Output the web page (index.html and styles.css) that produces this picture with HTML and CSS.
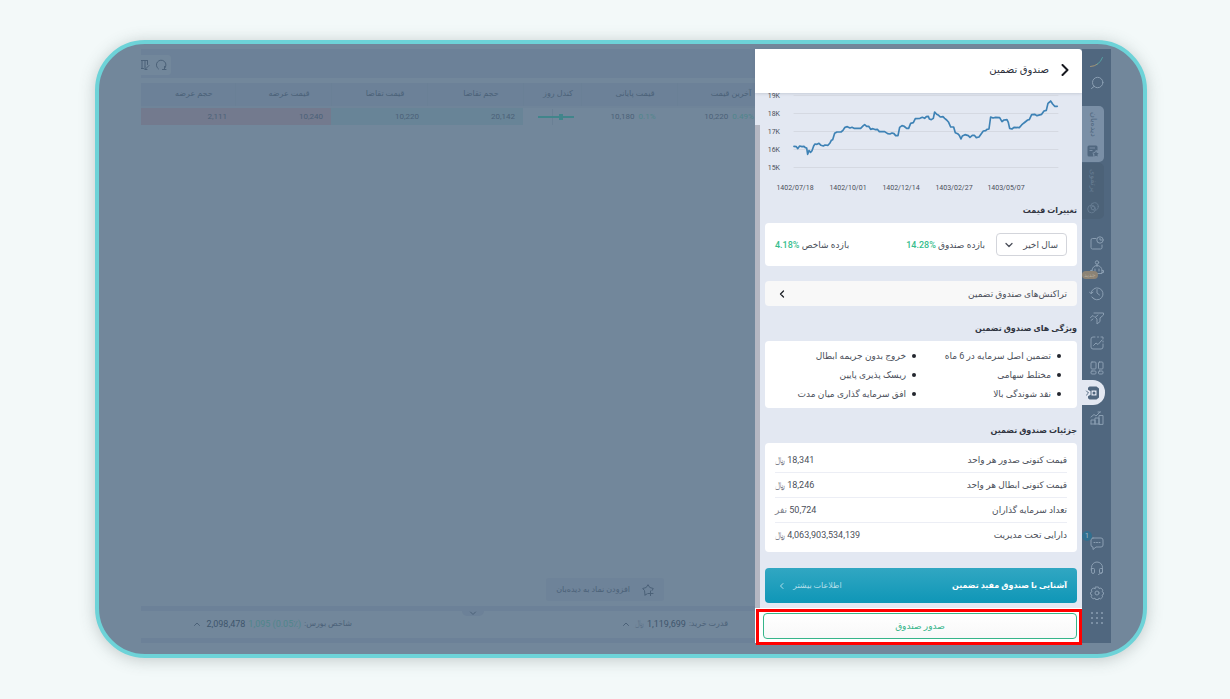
FILE: index.html
```html
<!DOCTYPE html>
<html lang="fa">
<head>
<meta charset="utf-8">
<title>صندوق تضمین</title>
<link rel="stylesheet" href="styles.css">
</head>
<body>
<div class="frame">
<div class="app">
  <main class="market">
    <div class="toolbar">
      <div class="tools">
        <button class="tool" aria-label="ستون‌ها"><svg viewBox="0 0 12 12"><path d="M0 1.500h6M1 1.500v8M4 1.500v6M0 9.500h2.500M6.500 1.500v4M4 10.500l4-4M4 8v2.500h2"/></svg></button>
        <button class="tool" aria-label="بازخوانی"><svg viewBox="0 0 12 12"><path d="M3.500 10A4.800 4.800 0 1 1 9.500 9.500M7.500 10.500h3.500M9.500 7.500v3"/></svg></button>
      </div>
    </div>
    <table class="quotes">
      <colgroup><col class="c-first"><col class="c-std"><col class="c-std"><col class="c-std"><col class="c-candle"><col class="c-std"><col class="c-std"></colgroup>
      <thead><tr><th>حجم عرضه</th><th>قیمت عرضه</th><th>قیمت تقاضا</th><th>حجم تقاضا</th><th>کندل روز</th><th>قیمت پایانی</th><th>آخرین قیمت</th></tr></thead>
      <tbody><tr>
        <td class="ask">2,111</td><td class="ask">10,240</td><td class="bid">10,220</td><td class="bid">20,142</td>
        <td class="mid"><svg class="candle" viewBox="0 0 36 16"><path class="axis" d="M14.500 0v16"/><path class="wick" d="M0 8h36"/><path class="body" d="M21 5h4v6h-4z"/></svg></td>
        <td class="mid">10,180 <span class="up">0.1%</span></td><td class="mid">10,220 <span class="up">0.49%</span></td>
      </tr></tbody>
    </table>
    <div class="space">
      <button class="add" dir="rtl"><svg viewBox="0 0 12 12"><path d="M3 11l-.5-4.500L.7 4.500 4.200 3.500 6 .7l1.800 2.800 3.500 1-1.300 2M3 11l2-1M8.500 7v5M6 9.500h5"/></svg>افزودن نماد به دیده‌بان</button>
    </div>
    <footer class="status" dir="rtl">
      <button class="pull" aria-label="باز کردن"><svg viewBox="0 0 8 8"><path d="M1.500 3L4 5.500 6.500 3"/></svg></button>
      <p class="stat power">قدرت خرید: <b>1,119,699</b> <i>﷼</i><svg viewBox="0 0 8 8"><path d="M1.500 5.500L4 3l2.500 2.500"/></svg></p>
      <p class="stat">شاخص بورس: <span class="up" dir="ltr">1,095 (0.05٪)</span> <b>2,098,478</b><svg viewBox="0 0 8 8"><path d="M1.500 5.500L4 3l2.500 2.500"/></svg></p>
    </footer>
  </main>

  <section class="panel" dir="rtl">
    <header class="panel-head">
      <button class="back" aria-label="بازگشت"><svg viewBox="0 0 8 12"><path d="M1.500 1L6.500 6l-5 5"/></svg></button>
      <h1>صندوق تضمین</h1>
    </header>
    <div class="panel-body">
      <svg class="chart" viewBox="0 0 312 107" direction="ltr">
        <path class="grid" d="M29 2.500h264M29 20.500h264M29 38.500h264M29 56.500h264M29 74.500h264"/>
        <g class="ylabels"><text x="15" y="4.500">19K</text><text x="15" y="22.500">18K</text><text x="15" y="40.500">17K</text><text x="15" y="58.500">16K</text><text x="15" y="76.500">15K</text></g>
        <g class="xlabels"><text x="30" y="97">1402/07/18</text><text x="83" y="97">1402/10/01</text><text x="136" y="97">1402/12/14</text><text x="189" y="97">1403/02/27</text><text x="241" y="97">1403/05/07</text></g>
        <g transform="translate(-15 -53) scale(.3333)"><polyline class="line" points="132,319 139,320 143,326 149,318 156,320 162,319 166,323 170,324 173,343 177,332 182,337 186,332 191,318 195,312 201,313 207,310 213,316 220,318 225,315 234,316 240,309 244,301 248,299 254,280 261,276 273,276 279,271 285,262 292,260 300,264 306,262 312,265 332,265 340,257 344,254 350,259 356,259 362,268 369,266 377,269 382,268 388,275 404,275 413,281 420,282 426,279 432,281 437,287 444,287 449,262 456,257 461,258 465,261 470,265 476,265 482,250 490,248 496,236 510,235 517,232 524,235 529,230 535,229 538,237 544,239 550,235 554,216 560,223 566,226 571,231 579,230 584,235 590,240 596,247 602,261 611,261 616,278 623,281 628,286 633,297 637,288 645,284 655,287 660,292 667,286 673,286 679,293 687,291 694,281 700,273 707,272 711,268 717,267 722,231 729,234 737,232 749,233 756,245 762,240 771,239 775,247 779,265 786,267 792,262 808,263 815,255 822,249 833,240 838,239 845,224 854,223 861,227 875,223 882,213 889,211 894,190 899,186 902,183 908,192 914,199 922,199"/></g>
      </svg>
      <h2>تغییرات قیمت</h2>
      <div class="card returns">
        <label class="select"><select aria-label="بازه"><option>سال اخیر</option></select><svg viewBox="0 0 8 8"><path d="M1 2.500l3 3 3-3"/></svg></label>
        <p>بازده صندوق <span class="gain" dir="ltr">14.28%</span></p>
        <p class="index">بازده شاخص <span class="gain" dir="ltr">4.18%</span></p>
      </div>
      <button class="link-row">تراکنش‌های صندوق تضمین<svg viewBox="0 0 6 8"><path d="M4.500 1l-3 3 3 3"/></svg></button>
      <h2>ویژگی های صندوق تضمین</h2>
      <ul class="card features">
        <li>تضمین اصل سرمایه در 6 ماه</li><li>خروج بدون جریمه ابطال</li>
        <li>مختلط سهامی</li><li>ریسک پذیری پایین</li>
        <li>نقد شوندگی بالا</li><li>افق سرمایه گذاری میان مدت</li>
      </ul>
      <h2>جزئیات صندوق تضمین</h2>
      <dl class="card details">
        <div><dt>قیمت کنونی صدور هر واحد</dt><dd>18,341 <small>﷼</small></dd></div>
        <div><dt>قیمت کنونی ابطال هر واحد</dt><dd>18,246 <small>﷼</small></dd></div>
        <div><dt>تعداد سرمایه گذاران</dt><dd>50,724 <small>نفر</small></dd></div>
        <div><dt>دارایی تحت مدیریت</dt><dd>4,063,903,534,139 <small>﷼</small></dd></div>
      </dl>
      <a class="banner" href="#"><strong>آشنایی با صندوق مفید تضمین</strong><span>اطلاعات بیشتر<svg viewBox="0 0 6 8"><path d="M4 1.500L1.500 4 4 6.500"/></svg></span></a>
    </div>
    <div class="panel-foot"><button class="issue">صدور صندوق</button></div>
  </section>

  <nav class="rail">
    <a class="item" href="#" aria-label="خانه"><svg viewBox="0 0 16 16"><path class="logo-a" d="M1.500 12.500q4 0 7-2.500"/><path class="logo-b" d="M8 10.500q4-2.500 5.500-7"/></svg></a>
    <button class="item search" aria-label="جستجو"><svg viewBox="0 0 16 16"><circle cx="8.700" cy="7.500" r="5.200"/><path d="M5 11.500l-2.500 2"/></svg></button>
    <button class="tab tab-on"><span>دیده‌بان</span><svg viewBox="0 0 12 12"><path class="fill" fill-rule="evenodd" d="M2 .5h7a1.500 1.500 0 0 1 1.500 1.500v3.500L9 5 7.500 7l-2 .8 1 3.700H2A1.500 1.500 0 0 1 .5 10V2A1.500 1.500 0 0 1 2 .5zM2.500 2.500v1H8v-1zM2.500 5v1h3V5z"/><path class="fill" d="M9 6.200l.9 1.700 1.800.3-1.200 1.400.2 1.900L9 10.800l-1.700.7.200-1.900-1.200-1.400 1.800-.3z"/></svg></button>
    <button class="tab"><span>پرتفوی</span><svg viewBox="0 0 12 12"><circle cx="4.500" cy="7" r="3.800"/><circle cx="7.500" cy="4.500" r="3.800"/><circle cx="6" cy="6" r="1.700"/></svg></button>
    <div class="group">
      <button class="item" aria-label="سفارش"><svg viewBox="0 0 16 16"><path d="M7 3.500H3.500A1.500 1.500 0 0 0 2 5v7.500A1.500 1.500 0 0 0 3.500 14h8a1.500 1.500 0 0 0 1.500-1.500V10"/><circle cx="11" cy="5" r="3.200"/><path d="M11 3.500V5h1.500"/></svg></button>
      <button class="item" aria-label="ربات"><svg viewBox="0 0 16 16"><circle cx="8" cy="2.500" r="1.700"/><path d="M8 4.500v2M3 13.500h10v-3a5 5 0 0 0-10 0zM3 10.500H1.500v2H3M13 10.500h1.500v2H13M6 9v2M10 9v2"/></svg><span class="new">جدید</span></button>
      <button class="item" aria-label="تاریخچه"><svg viewBox="0 0 16 16"><path d="M3 12.200A6 6 0 1 0 2 8.500M.5 7L2 8.700 4 7.200M8 4.500V8l2.500 2M3 12.200l2 1.500"/></svg></button>
      <button class="item" aria-label="فیلتر"><svg viewBox="0 0 16 16"><path d="M5 3h9.500v2L11 8v3.500L8 14V9L6.500 7.500M1.500 7.500L4 5.500l2 2 3-2.500M2 10.500l2-1.500"/></svg></button>
      <button class="item" aria-label="تحلیل"><svg viewBox="0 0 16 16"><path d="M6 2H4a2 2 0 0 0-2 2v8a2 2 0 0 0 2 2h8a2 2 0 0 0 2-2V9M4.500 10.500L7 8l2 1.500 4-4.500M8.500 2h1M12 2h2v2M14 6v1"/></svg></button>
      <button class="item" aria-label="داشبورد"><svg viewBox="0 0 16 16"><rect x="2" y="2" width="5" height="7" rx="1"/><rect x="9.500" y="2" width="4.500" height="7" rx="1"/><rect x="2" y="11" width="5" height="3" rx="1"/><rect x="9.500" y="11" width="4.500" height="3" rx="1"/></svg></button>
      <button class="item current" aria-label="صندوق"><svg viewBox="0 0 16 16"><path class="safe" fill-rule="evenodd" d="M4.500 1.500h7L14 3.500v9l-2.500 2h-7l-1.500-1.200v-2l2.500-1.600V6.300L3 4.700V2.700zM6.500 5.500v5h5v-5z"/><circle class="safe" cx="9" cy="8" r="1.500"/><path class="clasp" d="M1.500 6l2 2-2 2"/></svg></button>
      <button class="item" aria-label="نمودار"><svg viewBox="0 0 16 16"><path d="M2 14V10h4v4M6 14V8h4v6M10 14V5.500h4V14zM2 14h8M2 7l3-2.500L7 6l4-4M9 2h2.500"/></svg></button>
    </div>
    <div class="group bottom">
      <button class="item" aria-label="گفتگو"><svg viewBox="0 0 16 16"><path d="M4 3h8a2 2 0 0 1 2 2v5a2 2 0 0 1-2 2H7l-3 2.500V12a2 2 0 0 1-2-2V5a2 2 0 0 1 2-2zM5 7.500h1M7.500 7.500h1M10 7.500h1"/></svg><span class="count">1</span></button>
      <button class="item" aria-label="پشتیبانی"><svg viewBox="0 0 16 16"><path d="M2.500 11V7.500a5.500 5.500 0 0 1 11 0V12l-4 2.500M2.500 8.500h2a1 1 0 0 1 1 1v2.500a1 1 0 0 1-3 0zM13.500 8.500h-2a1 1 0 0 0-1 1v2.500a1 1 0 0 0 3 0"/></svg></button>
      <button class="item" aria-label="تنظیمات"><svg viewBox="0 0 16 16"><circle cx="8" cy="8" r="2"/><path d="M6.500 2h3l.6 1.700 1.800-.7 2 2.100-.8 1.700 1.400.7v1.800l-1.500.8.7 1.800-2.100 2-1.700-.8-.5 1.400H6.500L6 13.100l-1.900.8-2-2.100.9-1.800-1.500-.7V7.500l1.500-.7L2.200 5l2-2 1.800.7z"/></svg></button>
      <button class="item" aria-label="برنامه‌ها"><svg viewBox="0 0 16 16"><path class="dots" d="M3 3h.01M8 3h.01M13 3h.01M3 8h.01M8 8h.01M13 8h.01M3 13h.01M8 13h.01M13 13h.01"/></svg></button>
    </div>
  </nav>
</div>
</div>
</body>
</html>
```
FILE: styles.css
```css
* { box-sizing: border-box; }
body {
  margin: 0;
  min-height: 100vh;
  display: flex;
  padding: 40px 83px 41px 95px;
  background: #f3f9f9;
  font: 9px/14px Roboto, "DejaVu Sans", sans-serif;
  color: #4b4f5a;
}
button, select { font: inherit; color: inherit; border: 0; padding: 0; background: none; }
h1, h2, p, ul, dl, dd { margin: 0; padding: 0; }
svg { fill: none; stroke: currentColor; stroke-linecap: round; stroke-linejoin: round; }

.frame {
  flex: 1;
  min-width: 0;
  display: flex;
  padding: 5px 32px 11px 42px;
  border: 4px solid #6dd3d8;
  border-radius: 50px;
  background: #72879b;
  box-shadow: 0 2px 16px rgba(60, 80, 80, .28);
}
.app { flex: 1; display: flex; min-width: 0; }

/* Dimmed market view */
.market { flex: 1; min-width: 0; overflow: hidden; display: flex; flex-direction: column; color: #4b6178; font-size: 8px; }
.toolbar { padding: 6px 0; background: #6c8198; height: 29px; }
.tools { display: flex; gap: 2px; width: 30px; height: 20px; padding: 4px 0; background: #72879b; border-radius: 0 3px 3px 0; }
.tool, .tool svg { width: 12px; height: 12px; display: block; }
.quotes { width: 103%; margin-top: 5px; table-layout: fixed; border-collapse: collapse; }
.c-first { width: 94px; }
.c-std { width: 96px; }
.c-candle { width: 58px; }
.quotes th { height: 24px; padding: 0 0 2px 12px; background: #6c8198; font-weight: 400; border-right: 1px solid #6a8096; border-bottom: 2px solid #6f8499; }
.quotes td { height: 18px; padding: 0 8px 0 0; text-align: right; }
.quotes .ask { background: #737a8e; }
.quotes .bid { background: #688497; }
.quotes .mid { text-align: center; padding: 0 0 0 8px; white-space: nowrap; }
.up { color: #50868b; margin-left: 2px; }
.candle { width: 36px; height: 16px; display: block; margin: 0 auto; }
.candle .axis { stroke: #6a8095; }
.candle .wick { stroke: #41858b; stroke-width: 2; stroke-linecap: butt; }
.candle .body { fill: #41858b; stroke: none; }
.space { flex: 1; display: flex; align-items: flex-end; justify-content: flex-end; padding: 0 91px 5px 0; }
.add { display: flex; align-items: center; gap: 12px; height: 23px; padding: 0 10px; background: #6e8399; border-radius: 3px; }
.add svg { width: 12px; height: 12px; }
.status { position: relative; display: flex; height: 37px; padding: 0 27px 2px; align-items: center; border: solid #6c8198; border-width: 5px 0; }
.stat { display: flex; align-items: center; gap: 3px; flex: 1; white-space: nowrap; }
.stat.power { flex: 0 0 376px; }
.stat b { font-weight: 400; font-size: 9px; color: #3f566d; }
.stat i { font-style: normal; opacity: .5; }
.stat .up { font-size: 9px; margin: 0; }
.stat svg { width: 8px; height: 8px; margin-right: 2px; }
.pull { position: absolute; top: 0; left: 321px; width: 22px; height: 5px; background: #6c8198; border-radius: 0 0 5px 5px; }
.pull svg { display: block; width: 8px; height: 8px; margin: -2px auto 0; }

/* Fund drawer */
.panel { flex: 0 0 327px; display: flex; flex-direction: column; background: #e3e8f2; border-top-right-radius: 4px; }
.panel-head { display: flex; align-items: center; gap: 12px; height: 44px; padding: 0 13px 3px 0; background: #fff; border-radius: 0 4px 0 0; box-shadow: 0 1px 3px rgba(90, 100, 120, .2); }
.panel-head h1 { font-size: 10px; font-weight: 400; color: #2c303b; }
.back svg { display: block; width: 8px; height: 12px; stroke: #17191f; stroke-width: 2; }
.panel-body { flex: 1; padding: 0 5px 5px 10px; background: linear-gradient(#b5b7c2, #b5b7c2) 0 32px / 5px 100% no-repeat; }
.chart { display: block; width: 100%; }
.grid { stroke: #d5d9e2; }
.line { stroke: #3e82b5; stroke-width: 5; }
.chart text { stroke: none; fill: #4b4f5a; font-size: 7px; text-anchor: middle; }
.chart .ylabels text { text-anchor: start; direction: rtl; }
.panel h2 { padding-top: 1px; font-size: 8px; line-height: 20px; font-weight: 700; color: #30343f; }
.card { background: #fff; border-radius: 4px; }
.returns { display: flex; align-items: center; height: 43px; margin-top: 2px; padding: 0 10px; white-space: nowrap; }
.select { position: relative; width: 71px; margin-left: 11px; }
.select select { appearance: none; display: block; width: 100%; height: 23px; padding: 0 8px; border: 1px solid #d3d5db; border-radius: 4px; }
.select svg { position: absolute; left: 9px; top: 8px; width: 8px; height: 8px; stroke-width: 1.300; }
.gain { color: #36bd8d; font-weight: 500; }
.index { margin-right: auto; }
.link-row { display: flex; width: 100%; height: 25px; margin: 15px 0 12px; padding: 0 10px 0 14px; align-items: center; justify-content: space-between; background: #f8f8f8; border-radius: 4px; }
.link-row svg { width: 6px; height: 8px; stroke: #1e2128; stroke-width: 1.300; }
.features { display: grid; grid-template-columns: 145px 1fr; margin: 2px 0 12px; padding: 5px 16px; list-style: none; white-space: nowrap; }
.features li { display: flex; align-items: center; gap: 6px; height: 19px; }
.features li::before { content: ""; width: 4px; height: 4px; border-radius: 50%; background: #23262e; }
.details { margin: 2px 0 16px; padding: 4px 10px 5px; }
.details div { display: flex; justify-content: space-between; align-items: center; height: 25px; }
.details div + div { border-top: 1px solid #eceef5; }
.details small { font-size: 9px; color: #7d818b; }
.banner { display: flex; align-items: center; justify-content: space-between; height: 35px; padding: 0 10px 0 14px; border-radius: 4px; background: linear-gradient(#31a7c2, #0f96b7); color: #fff; text-decoration: none; font-size: 8px; }
.banner span { display: flex; align-items: center; gap: 8px; color: #b5dfea; }
.banner svg { width: 6px; height: 8px; }
.panel-foot { position: relative; display: flex; padding: 5px 5px 4px 8px; background: #fff; }
.panel-foot::after { content: ""; position: absolute; inset: 1px 0 -2px 1px; border: 3px solid #f00; pointer-events: none; }
.issue { flex: 1; height: 26px; border: 1px solid #36b58a; border-radius: 4px; color: #36b58a; background: linear-gradient(#fff, #f8f8f8); }

/* Side rail */
.rail { flex: 0 0 29px; display: flex; flex-direction: column; background: #50677f; color: #8a9eb2; padding-bottom: 13px; }
.item { position: relative; display: grid; place-items: center; width: 29px; height: 25px; color: inherit; }
.item svg { width: 16px; height: 16px; }
.logo-a { stroke: #a49678; }
.logo-b { stroke: #55a1a3; }
.search { margin: -4px 0 11px; }
.tab { display: flex; flex-direction: column; align-items: center; justify-content: space-between; width: 22px; height: 56px; padding: 6px 0 5px; margin-bottom: 1px; border-radius: 0 5px 5px 0; background: #4c6278; color: #657b91; }
.tab span { writing-mode: vertical-rl; font-size: 8px; line-height: 12px; }
.tab svg { width: 12px; height: 12px; }
.tab-on { background: #7a8fa6; color: #50677f; }
.fill { fill: currentColor; stroke: none; }
.group { padding-top: 10px; }
.bottom { margin-top: auto; padding: 0; }
.current { width: 23px; padding: 0 1px 0 0; background: #e3e8f2; border-radius: 0 12px 12px 0; }
.safe { fill: #50677f; stroke: none; }
.clasp { stroke: #50677f; }
.new { position: absolute; left: 0; top: 16px; padding: 0 2px; border-radius: 4px; background: #8c8375; color: #b2a999; font-size: 6px; line-height: 8px; }
.count { position: absolute; left: 0; top: 1px; width: 10px; height: 10px; border-radius: 50%; background: #32708f; color: #a5bccc; font-size: 7px; line-height: 10px; text-align: center; }
.dots { stroke-width: 2; }
```
